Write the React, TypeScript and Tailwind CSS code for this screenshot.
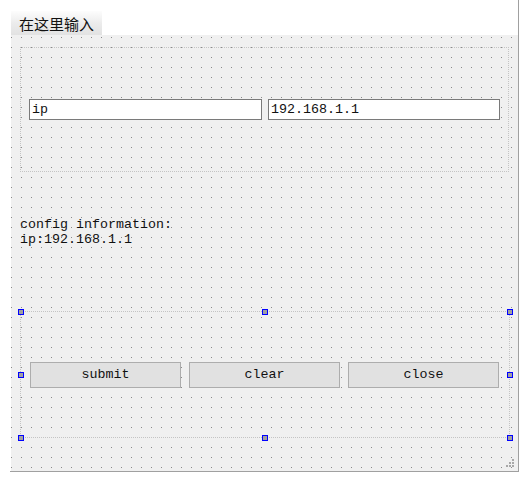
import React from 'react';

const mono = "font-['Liberation_Mono',monospace] text-[13.33px] text-[#111]";

const Handle: React.FC<{ className: string }> = ({ className }) => (
    <div className={"absolute w-[6px] h-[6px] border border-[#0000ff] bg-[#a0a0a0] " + className}></div>
);

const App: React.FC = () => {
    return (
        <div className="w-[529px] h-[482px] bg-white">
            <div className="ml-[10px] pt-[10px] w-[509px] h-[472px] border-r border-b border-[#a0a0a0]">
                <div className="flex pl-[1px] pt-[1px]">
                    <div className="h-[24px] w-[91px] pl-[8px] flex items-center bg-gradient-to-b from-[#fdfdfd] via-[#ececec] to-[#e2e2e2] font-['Noto_Sans_CJK_SC',sans-serif] text-[15px] leading-none text-[#111]">
                        在这里输入
                    </div>
                </div>
                <div className="relative ml-[1px] h-[436px] w-[507px] bg-[#f0f0f0] bg-[radial-gradient(circle_at_0.5px_0.5px,#8a8a8a_0.6px,transparent_0.8px)] bg-[size:10px_10px] bg-[position:0px_2px] pt-[12px] pl-[9px]">
                    {/* top layout */}
                    <div className="w-[489px] h-[125px] border border-dotted border-[#c4c4c4] flex items-center gap-[6px] pl-[8px]">
                        <div className={"w-[233px] h-[21px] bg-white border border-[#7a7a7a] pl-[2px] flex items-center " + mono}>ip</div>
                        <div className={"w-[232px] h-[21px] bg-white border border-[#7a7a7a] pl-[2px] flex items-center " + mono}>192.168.1.1</div>
                    </div>
                    <div className={"mt-[45px] leading-[15px] " + mono}>
                        <div>config information:</div>
                        <div>ip:192.168.1.1</div>
                    </div>
                    {/* button layout */}
                    <div className="relative mt-[64px] w-[490px] h-[127px] border border-dotted border-[#c4c4c4] flex items-center gap-[8px] pl-[9px]">
                        <button className={"w-[151px] h-[26px] bg-[#e1e1e1] border border-[#adadad] " + mono}>submit</button>
                        <button className={"w-[151px] h-[26px] bg-[#e1e1e1] border border-[#adadad] " + mono}>clear</button>
                        <button className={"w-[151px] h-[26px] bg-[#e1e1e1] border border-[#adadad] " + mono}>close</button>
                        <Handle className="left-[-3px] top-[-3px]" />
                        <Handle className="left-[241px] top-[-3px]" />
                        <Handle className="right-[-4px] top-[-3px]" />
                        <Handle className="left-[-3px] top-[60px]" />
                        <Handle className="right-[-4px] top-[60px]" />
                        <Handle className="left-[-3px] bottom-[-4px]" />
                        <Handle className="left-[241px] bottom-[-4px]" />
                        <Handle className="right-[-4px] bottom-[-4px]" />
                    </div>
                    <svg className="absolute right-[3px] bottom-[2px]" width="11" height="11" viewBox="0 0 11 11">
                        <rect x="8" y="1" width="2" height="2" fill="#a8a8a8" />
                        <rect x="5" y="4" width="2" height="2" fill="#a8a8a8" />
                        <rect x="8" y="4" width="2" height="2" fill="#a8a8a8" />
                        <rect x="2" y="7" width="2" height="2" fill="#a8a8a8" />
                        <rect x="5" y="7" width="2" height="2" fill="#a8a8a8" />
                        <rect x="8" y="7" width="2" height="2" fill="#a8a8a8" />
                    </svg>
                </div>
            </div>
        </div>
    );
};

export default App;
